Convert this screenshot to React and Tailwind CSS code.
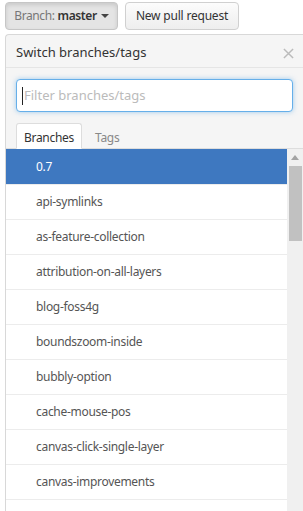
export default function App() {
  const branches = [
    "0.7",
    "api-symlinks",
    "as-feature-collection",
    "attribution-on-all-layers",
    "blog-foss4g",
    "boundszoom-inside",
    "bubbly-option",
    "cache-mouse-pos",
    "canvas-click-single-layer",
    "canvas-improvements",
    "",
  ];
  return (
    <div className="w-[303px] h-[511px] overflow-hidden bg-white font-['Segoe_UI','Noto_Sans',sans-serif] text-[14px] text-[#333]">
      <div className="flex gap-[7px] pl-[5px] pt-[2px]">
        <div className="h-[28px] w-[113px] flex items-center justify-center gap-[3px] rounded-[4px] border border-[#c6c6c6] bg-[#e4e4e4] shadow-[inset_0_2px_4px_rgba(0,0,0,0.12)] text-[12px] tracking-[-0.4px]">
          <span className="text-[#777]">Branch:</span>
          <span className="text-[#333] font-semibold">master</span>
          <svg width="8" height="4" viewBox="0 0 8 4" className="ml-[1px]"><path d="M0 0h8L4 4z" fill="#444" /></svg>
        </div>
        <div className="h-[28px] w-[114px] flex items-center justify-center rounded-[4px] border border-[#d0d0d0] bg-gradient-to-b from-[#fcfcfc] to-[#eeeeee] text-[12px] tracking-[-0.2px] text-[#333]">
          New pull request
        </div>
      </div>
      <div className="mt-[4px] ml-[5px] border-l border-t border-[#d8d8d8] rounded-tl-[4px] bg-[#f5f5f5]">
        <div className="h-[33px] flex items-center justify-between pt-[4px] pl-[10px] pr-[9px] border-b border-[#e5e5e5] text-[13px] text-[#333]">
          <span>Switch branches/tags</span>
          <svg width="11" height="11" viewBox="0 0 12 12"><path d="M1 1l10 10M11 1L1 11" stroke="#bbb" strokeWidth="1.6" /></svg>
        </div>
        <div className="px-[10px] pt-[11px]">
          <div className="h-[33px] rounded-[4px] border border-[#66afe9] bg-white shadow-[0_0_5px_rgba(102,175,233,0.6)] flex items-center pl-[5px] text-[13px] text-[#bbb]">
            <span className="w-px h-[18px] bg-[#222] mr-[1px]" />
            Filter branches/tags
          </div>
        </div>
        <div className="mt-[11px] px-[10px] flex border-b border-[#ddd] text-[12px] tracking-[-0.3px]">
          <div className="-mb-px h-[26px] w-[66px] pt-[4px] flex items-center justify-center bg-white border border-[#ddd] border-b-white rounded-t-[3px] text-[#333]">Branches</div>
          <div className="h-[25px] pt-[4px] pl-[13px] flex items-center text-[#888]">Tags</div>
        </div>
        <div className="flex bg-white">
          <div className="w-[281px]">
            {branches.map((b, i) => (
              <div
                key={i}
                className={
                  i === 0
                    ? "h-[35px] flex items-center pl-[30px] bg-[#3e78c0] text-white text-[12px] tracking-[-0.3px]"
                    : "h-[35px] flex items-center pl-[30px] border-t border-[#ececec] text-[#555] text-[12px] tracking-[-0.3px]"
                }
              >
                {b}
              </div>
            ))}
          </div>
          <div className="w-[16px] bg-[#f0f0f0] flex flex-col items-center">
            <svg width="8" height="5" viewBox="0 0 8 5" className="mt-[6px]"><path d="M0 5h8L4 0z" fill="#a3a3a3" /></svg>
            <div className="mt-[6px] w-[13px] h-[75px] bg-[#c1c1c1]" />
          </div>
        </div>
      </div>
    </div>
  );
}
